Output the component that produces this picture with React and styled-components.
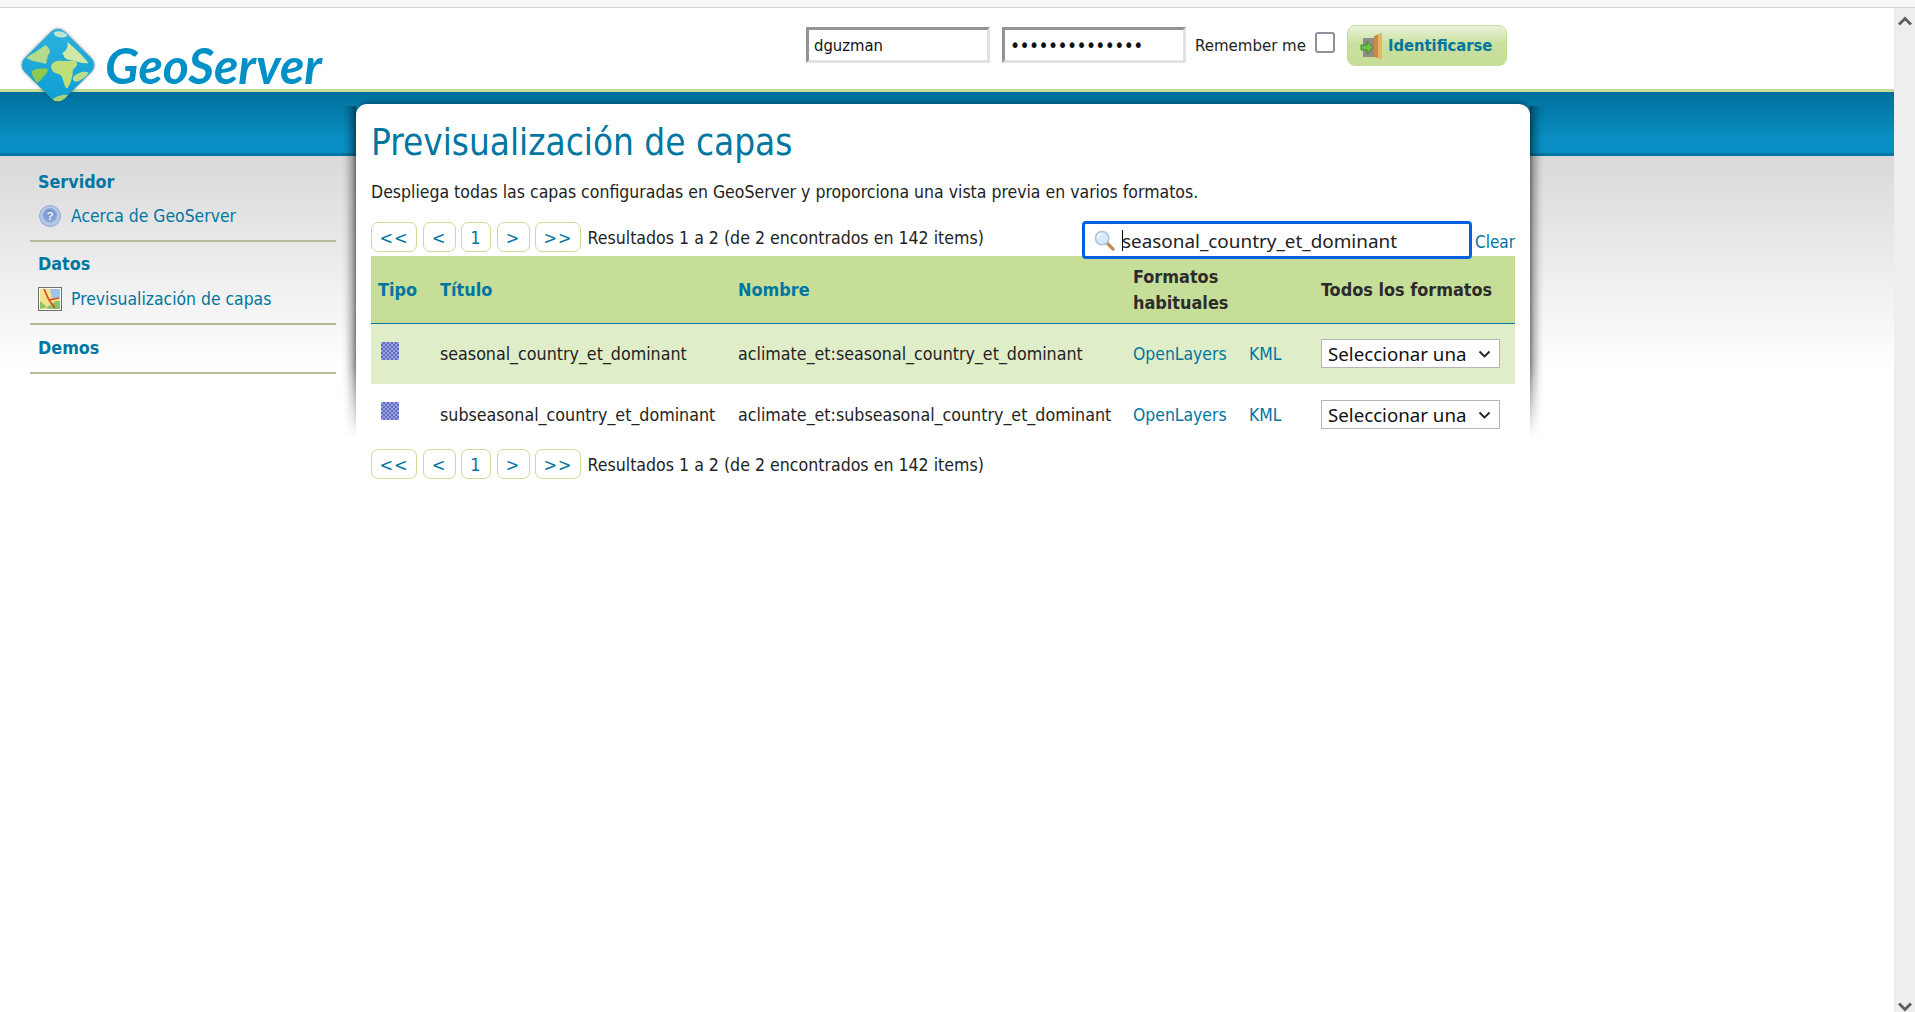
import React from 'react'
import styled, { createGlobalStyle } from 'styled-components'

const Global = createGlobalStyle`
  html, body { margin: 0; padding: 0; height: 100%; overflow: hidden; background: #fff; }
  body { font-family: "DejaVu Sans Condensed", "DejaVu Sans", sans-serif; color: #232323; }
  * { box-sizing: border-box; }
`

const LINK = '#0076a1'

function Globe() {
  return (
    <LogoMark viewBox="0 0 76 76">
      <defs>
        <clipPath id="gem"><rect x="11" y="11" width="54" height="54" rx="9" transform="rotate(45 38 38)" /></clipPath>
        <filter id="gemblur"><feGaussianBlur stdDeviation="1.3" /></filter>
        <linearGradient id="sea" x1="0" y1="0" x2="0" y2="1">
          <stop offset="0" stopColor="#2fb2de" />
          <stop offset="1" stopColor="#0e9dd4" />
        </linearGradient>
      </defs>
      <rect x="11" y="11" width="54" height="54" rx="9" transform="rotate(45 38 38)" fill="#444" opacity=".6" filter="url(#gemblur)" />
      <g clipPath="url(#gem)">
        <rect width="76" height="76" fill="url(#sea)" />
        <path d="M8 31 C14 27 20 24 26 19 C29 21 31 24 30 27 C27 29 29 32 27 33 C28 36 26 38 24 36 C20 35 14 35 8 31 Z" fill="#b4dc8c" />
        <path d="M13 44 C18 40 24 42 28 41 C29 45 26 47 24 49 C22 52 20 54 18 55 C15 51 13 48 13 44 Z" fill="#8fc94f" />
        <path d="M34 7 C38 5 44 6 47 10 C44 13 38 12 35 10 Z" fill="#bfe5d6" />
        <path d="M47 16 C51 20 56 24 60 28 L67 36 C62 37 57 35 53 34 C50 32 47 34 46 32 C43 31 44 28 42 27 C45 25 48 22 47 16 Z" fill="#cfe9a8" />
        <path d="M33 36 C38 32 44 35 49 34 C54 33 57 35 56 38 C55 41 52 41 52 44 C52 50 50 56 47 60 C44 60 44 54 42 50 C41 46 36 47 33 44 C31 41 31 38 33 36 Z" fill="#bfdf78" />
        <path d="M52 50 C55 46 62 43 67 45 C66 49 60 53 55 54 C53 53 52 52 52 50 Z" fill="#b9dd8a" />
        <path d="M31 72 C36 67 44 65 50 67 L38 79 Z" fill="#a4d276" />
      </g>
    </LogoMark>
  )
}

function DoorIcon() {
  return (
    <svg width="24" height="26" viewBox="0 0 24 26">
      <path d="M3 5 L14 5 L14 24 L3 24 Z" fill="#8d8f86" />
      <path d="M14 3 L22 0 L22 26 L14 24 Z" fill="#c98a45" />
      <path d="M18 2 L22 0 L22 26 L18 25 Z" fill="#e9b36c" />
      <path d="M1 12 L7 12 L7 8 L13 14.5 L7 21 L7 17 L1 17 Z" fill="#6fc04a" stroke="#3d8a2a" strokeWidth="1" />
    </svg>
  )
}

function HelpIcon() {
  return (
    <svg width="22" height="22" viewBox="0 0 22 22">
      <defs>
        <radialGradient id="help" cx=".5" cy=".35" r=".65">
          <stop offset="0" stopColor="#6f8fc6" />
          <stop offset="1" stopColor="#93acd9" />
        </radialGradient>
      </defs>
      <circle cx="11" cy="11" r="10.5" fill="#b4c8ea" stroke="#8fa9d6" />
      <circle cx="11" cy="10.5" r="7.2" fill="url(#help)" />
      <text x="11" y="15" textAnchor="middle" fontSize="11.5" fontWeight="700" fontFamily="Liberation Sans" fill="#eef3fb">?</text>
    </svg>
  )
}

function MapIcon() {
  return (
    <svg width="24" height="24" viewBox="0 0 24 24">
      <rect x=".5" y=".5" width="23" height="23" fill="#fff" stroke="#6d7263" />
      <rect x="2" y="2" width="20" height="20" fill="#f2e28a" />
      <path d="M12 2 H22 V11 H14 Z" fill="#9dc3e6" />
      <path d="M2 14 L9 20 L2 22 Z M9 20 L18 14 L22 14 V22 H9 Z" fill="#8cc468" />
      <path d="M6 2 L11 13 L17 21 M11 13 L21 11" fill="none" stroke="#d8452c" strokeWidth="1.6" />
    </svg>
  )
}

function LayerIcon({ id }) {
  return (
    <LayerSvg viewBox="0 0 18 18">
      <defs>
        <pattern id={id} width="4" height="4" patternUnits="userSpaceOnUse">
          <rect width="4" height="4" fill="#5f6bc4" />
          <rect width="2" height="2" fill="#9aa3e0" />
          <rect x="2" y="2" width="2" height="2" fill="#9aa3e0" />
        </pattern>
      </defs>
      <rect width="18" height="18" fill={`url(#${id})`} />
    </LayerSvg>
  )
}

function SearchIcon() {
  return (
    <SearchGlyph viewBox="0 0 22 22">
      <path d="M13 13 L20 20" stroke="#c08a50" strokeWidth="3.4" strokeLinecap="round" />
      <circle cx="8.5" cy="8.5" r="7" fill="#d9e9f8" stroke="#a9c4de" strokeWidth="1.6" />
      <path d="M4 8 C4 5.5 6 4 8 4" stroke="#fff" strokeWidth="1.6" fill="none" />
    </SearchGlyph>
  )
}

function Chevron() {
  return (
    <svg width="13" height="8" viewBox="0 0 13 8">
      <path d="M1.5 1.5 L6.5 6.5 L11.5 1.5" fill="none" stroke="#222" strokeWidth="1.8" />
    </svg>
  )
}

function Pager() {
  return (
    <PagerRow>
      <PageBtn $w={46}>&lt;&lt;</PageBtn>
      <PageBtn $w={33}>&lt;</PageBtn>
      <PageBtn $w={30}>1</PageBtn>
      <PageBtn $w={33}>&gt;</PageBtn>
      <PageBtn $w={46}>&gt;&gt;</PageBtn>
      <PagerText>Resultados 1 a 2 (de 2 encontrados en 142 items)</PagerText>
    </PagerRow>
  )
}

function Row({ title, odd, id }) {
  return (
    <Tr $odd={odd}>
      <IconCell><LayerIcon id={id} /></IconCell>
      <Td>{title}</Td>
      <Td>aclimate_et:{title}</Td>
      <Td><Link>OpenLayers</Link></Td>
      <Td><Link>KML</Link></Td>
      <Td>
        <FakeSelect>
          <span>Seleccionar una</span>
          <Chevron />
        </FakeSelect>
      </Td>
    </Tr>
  )
}

export default function App() {
  return (
    <>
      <Global />
      <TopStrip />
      <Viewport>
        <Page>
          <Header>
            <Logo>
              <Globe />
              <LogoText>GeoServer</LogoText>
            </Logo>
            <Login>
              <LoginInput defaultValue="dguzman" readOnly />
              <LoginInput $dots type="password" defaultValue="12345678901234" readOnly />
              <RememberLabel>Remember me</RememberLabel>
              <Check />
              <LoginButton>
                <DoorIcon />
                Identificarse
              </LoginButton>
            </Login>
          </Header>
          <Band />
          <Body>
            <Sidebar>
              <NavSection>
                <NavHead>Servidor</NavHead>
                <NavItem>
                  <NavIcon $left={1}><HelpIcon /></NavIcon>
                  Acerca de GeoServer
                </NavItem>
              </NavSection>
              <NavSection $top={11}>
                <NavHead>Datos</NavHead>
                <NavItem $gap={11}>
                  <NavIcon><MapIcon /></NavIcon>
                  Previsualización de capas
                </NavItem>
              </NavSection>
              <NavSection $top={12} $bottom={13}>
                <NavHead>Demos</NavHead>
              </NavSection>
            </Sidebar>
            <PanelWrap>
              <Panel>
                <Title>Previsualización de capas</Title>
                <Desc>Despliega todas las capas configuradas en GeoServer y proporciona una vista previa en varios formatos.</Desc>
                <FilterRow>
                  <Pager />
                  <FilterBox>
                    <SearchBox>
                      <SearchIcon />
                      <Caret />
                      <SearchInput defaultValue="seasonal_country_et_dominant" readOnly />
                    </SearchBox>
                    <ClearLink>Clear</ClearLink>
                  </FilterBox>
                </FilterRow>
                <Table>
                  <colgroup>
                    <col width="62" />
                    <col width="298" />
                    <col width="395" />
                    <col width="116" />
                    <col width="72" />
                    <col width="201" />
                  </colgroup>
                  <thead>
                    <tr>
                      <Th $link>Tipo</Th>
                      <Th $link>Título</Th>
                      <Th $link>Nombre</Th>
                      <Th colSpan={2}>Formatos<br />habituales</Th>
                      <Th>Todos los formatos</Th>
                    </tr>
                  </thead>
                  <tbody>
                    <Row odd id="lay1" title="seasonal_country_et_dominant" />
                    <Row id="lay2" title="subseasonal_country_et_dominant" />
                  </tbody>
                </Table>
                <BottomPager><Pager /></BottomPager>
              </Panel>
            </PanelWrap>
          </Body>
        </Page>
        <Scrollbar>
          <ScrollArrow viewBox="0 0 14 10"><path d="M1 8.5 L7 2.5 L13 8.5" fill="none" stroke="#5f5f5f" strokeWidth="3" /></ScrollArrow>
          <ScrollArrow viewBox="0 0 14 10"><path d="M1 1.5 L7 7.5 L13 1.5" fill="none" stroke="#5f5f5f" strokeWidth="3" /></ScrollArrow>
        </Scrollbar>
      </Viewport>
    </>
  )
}

const TopStrip = styled.div`
  height: 8px;
  background: #f8f8fa;
  border-bottom: 1px solid #d2d2d2;
`
const Viewport = styled.div`
  display: flex;
  height: 1004px;
  overflow: hidden;
`
const Page = styled.div`
  flex: 1;
  min-width: 0;
  display: flex;
  flex-direction: column;
`
const Scrollbar = styled.div`
  width: 21px;
  flex: none;
  background: #eeeeee;
  display: flex;
  flex-direction: column;
  justify-content: space-between;
  align-items: center;
  padding: 8px 0 0;
`
const ScrollArrow = styled.svg`
  width: 14px;
  height: 10px;
`
const Header = styled.div`
  height: 84px;
  flex: none;
  display: flex;
  background: #fff;
  border-bottom: 3px solid #c6de98;
  position: relative;
  z-index: 2;
`
const Logo = styled.div`
  width: 796px;
  flex: none;
  display: flex;
  align-items: flex-start;
  padding: 17px 0 0 18px;
`
const LogoMark = styled.svg`
  width: 80px;
  height: 80px;
  flex: none;
`
const LogoText = styled.div`
  font-family: Lato, "Open Sans", sans-serif;
  font-style: italic;
  font-weight: 700;
  font-size: 50px;
  line-height: 60px;
  color: #0090c8;
  margin: 10px 0 0 7px;
`
const Login = styled.div`
  display: flex;
  align-items: flex-start;
  padding-top: 19px;
  margin-left: 10px;
`
const LoginInput = styled.input`
  width: 184px;
  height: 36px;
  margin: 0 12px 0 0;
  padding: 0 5px;
  border-style: solid;
  border-width: 3px;
  border-color: #949494 #e2e2e2 #e2e2e2 #949494;
  font-family: inherit;
  font-size: ${p => (p.$dots ? '19px' : '16.5px')};
  letter-spacing: ${p => (p.$dots ? '-0.6px' : '0')};
  color: #111;
  outline: none;
`
const RememberLabel = styled.span`
  font-size: 16.7px;
  line-height: 36px;
  margin: 0 9px 0 -3px;
`
const Check = styled.span`
  width: 20px;
  height: 21px;
  margin: 5px 12px 0 0;
  border: 2px solid #8f8f9d;
  border-radius: 3px;
  background: #fff;
`
const LoginButton = styled.div`
  width: 160px;
  height: 41px;
  margin-top: -2px;
  display: flex;
  align-items: center;
  gap: 4px;
  padding-left: 12px;
  border: 1px solid #c6de98;
  border-radius: 8px;
  background: linear-gradient(#eaf3dc, #c9e09e 45%, #c6de98);
  font-weight: 700;
  font-size: 16.4px;
  color: ${LINK};
`
const Band = styled.div`
  height: 64px;
  flex: none;
  background: linear-gradient(#006f9b, #0a8fc4 75%, #0a8fc4 95%, #0076a1 95%);
`
const Body = styled.div`
  flex: 1;
  display: flex;
  align-items: flex-start;
  background: linear-gradient(#d9d9d9, #ffffff 215px, #ffffff);
`
const Sidebar = styled.div`
  width: 356px;
  flex: none;
  padding: 5px 20px 0 30px;
`
const NavSection = styled.div`
  padding: ${p => p.$top || 10}px 8px ${p => p.$bottom || 11}px;
  border-bottom: 2px solid #b2bd97;
`
const NavHead = styled.div`
  font-weight: 700;
  font-size: 17.8px;
  line-height: 22px;
  color: ${LINK};
`
const NavItem = styled.div`
  display: flex;
  align-items: center;
  height: 26px;
  margin-top: ${p => p.$gap || 10}px;
  font-size: 17.4px;
  color: ${LINK};
`
const NavIcon = styled.span`
  display: flex;
  width: 33px;
  padding-left: ${p => p.$left || 0}px;
`
const PanelWrap = styled.div`
  width: 1174px;
  flex: none;
  margin-top: -52px;
  position: relative;
  z-index: 1;

  &::before {
    content: "";
    position: absolute;
    left: -14px;
    right: -14px;
    top: 2px;
    height: 332px;
    z-index: -1;
    background:
      linear-gradient(to right, transparent, rgba(0, 0, 0, 0.05) 4px, rgba(0, 0, 0, 0.25) 10px, rgba(0, 0, 0, 0.5) 14px, transparent 14px),
      linear-gradient(to left, transparent, rgba(0, 0, 0, 0.05) 4px, rgba(0, 0, 0, 0.25) 10px, rgba(0, 0, 0, 0.5) 14px, transparent 14px);
    mask-image: linear-gradient(#000 78%, transparent);
  }
`
const Panel = styled.div`
  background: #fff;
  border-radius: 11px 11px 0 0;
  padding: 16px 15px 30px;
  box-shadow: 0 -2px 5px -1px rgba(0, 0, 0, 0.4);
  clip-path: inset(-10px 0 0 0);
`
const Title = styled.h1`
  margin: 0;
  font-weight: 400;
  font-size: 36.6px;
  line-height: 46px;
  color: ${LINK};
`
const Desc = styled.p`
  margin: 16px 0 0;
  font-size: 17.5px;
  line-height: 20px;
`
const FilterRow = styled.div`
  display: flex;
  justify-content: space-between;
  align-items: flex-start;
  height: 34px;
  margin-top: 20px;
`
const PagerRow = styled.div`
  display: flex;
  align-items: center;
  gap: 5.5px;
  height: 30px;
`
const PageBtn = styled.span`
  width: ${p => p.$w}px;
  height: 30px;
  display: flex;
  align-items: center;
  justify-content: center;
  border: 1px solid #c6de98;
  border-radius: 7px;
  font-size: 18px;
  letter-spacing: 1px;
  color: ${LINK};
`
const PagerText = styled.span`
  font-size: 17.6px;
  margin-left: 1px;
  padding-top: 2px;
`
const FilterBox = styled.div`
  display: flex;
  align-items: flex-start;
  margin-top: -1px;
  position: relative;
  z-index: 1;
`
const SearchBox = styled.div`
  width: 390px;
  height: 38px;
  display: flex;
  align-items: center;
  padding-left: 9px;
  background: #fff;
  border: 3px solid #0060df;
  border-radius: 4px;
  position: relative;
`
const SearchGlyph = styled.svg`
  width: 21px;
  height: 21px;
  flex: none;
`
const Caret = styled.span`
  position: absolute;
  left: 37px;
  top: 6px;
  width: 1px;
  height: 21px;
  background: #000;
`
const SearchInput = styled.input`
  flex: 1;
  min-width: 0;
  margin-left: 7px;
  padding: 2px 0 0;
  border: none;
  outline: none;
  background: transparent;
  font-family: "Noto Sans", sans-serif;
  font-size: 18.9px;
  color: #222;
`
const ClearLink = styled.span`
  margin: 10px 0 0 3px;
  font-size: 17px;
  line-height: 22px;
  color: ${LINK};
`
const Table = styled.table`
  width: 1144px;
  table-layout: fixed;
  border-collapse: collapse;
  font-size: 17.7px;
`
const Th = styled.th`
  height: 67px;
  padding: 2px 7px 0;
  background: #c6de98;
  border-bottom: 1px solid ${LINK};
  text-align: left;
  font-weight: 700;
  font-size: 17.9px;
  line-height: 26px;
  color: ${p => (p.$link ? LINK : '#2c2c2c')};
`
const Tr = styled.tr`
  height: 61px;
  background: ${p => (p.$odd ? '#e0edc9' : '#fff')};
`
const Td = styled.td`
  padding: 0 7px;
  white-space: nowrap;
`
const IconCell = styled.td`
  padding: 18px 0 0 10px;
  vertical-align: top;
`
const LayerSvg = styled.svg`
  display: block;
  width: 18px;
  height: 18px;
`
const Link = styled.span`
  font-size: 17.4px;
  color: ${LINK};
`
const FakeSelect = styled.div`
  width: 179px;
  height: 29px;
  display: flex;
  align-items: center;
  justify-content: space-between;
  padding: 0 8px 0 6px;
  background: #fff;
  border: 1px solid #b5b5b5;
  font-family: "Noto Sans", sans-serif;
  font-size: 18.7px;
  color: #111;
`
const BottomPager = styled.div`
  margin-top: 4px;
`
